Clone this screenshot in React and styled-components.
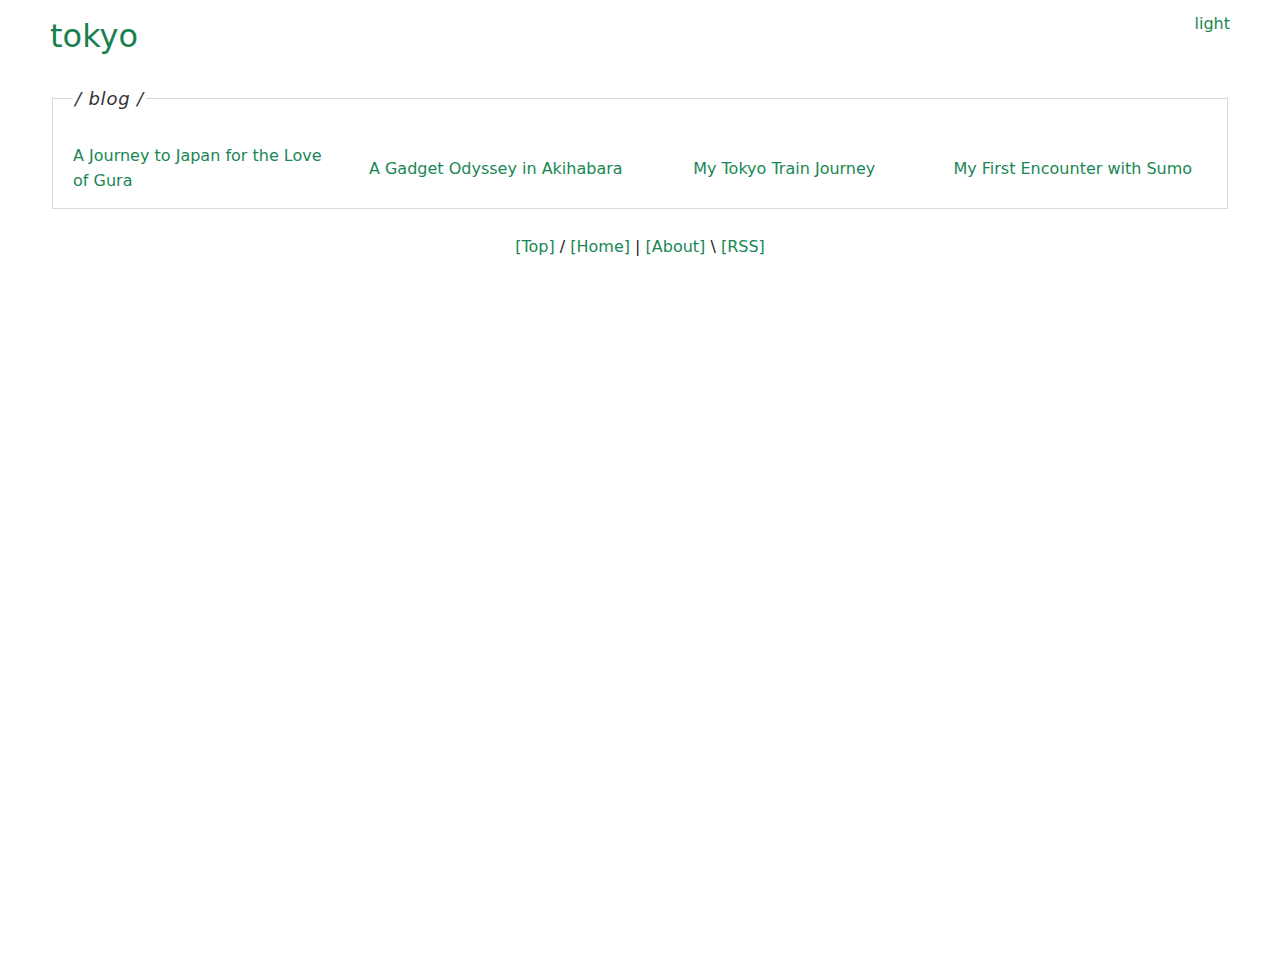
import styled, { createGlobalStyle } from 'styled-components';

const Global = createGlobalStyle`
  body {
    margin: 0;
    background: #fff;
    font-family: "DejaVu Sans", sans-serif;
    font-size: 16px;
    color: #222;
  }
  a {
    color: #198754;
    text-decoration: none;
  }
`;

const Page = styled.div`
  padding: 0 50px;
`;

const Header = styled.header`
  display: flex;
  justify-content: space-between;
  align-items: flex-start;
  padding-top: 14px;
`;

const Title = styled.a`
  font-size: 32px;
  line-height: 44px;
  color: #1a7f50;
`;

const Toggle = styled.a`
  font-size: 16px;
  line-height: 18px;
  margin-top: 1px;
`;

const Box = styled.fieldset`
  margin: 30px 2px 0;
  border: 1px solid #d5d9e0;
  padding: 34px 20px 15px;
`;

const Legend = styled.legend`
  font-style: italic;
  font-size: 18px;
  color: #333;
  padding: 0 2px;
  margin-left: 0;
  letter-spacing: 0.8px;
`;

const Posts = styled.div`
  display: grid;
  grid-template-columns: repeat(4, 1fr);
  gap: 20px;
  justify-items: center;
  align-items: center;
`;

const Post = styled.a`
  font-size: 16px;
  line-height: 25px;
`;

const Footer = styled.footer`
  text-align: center;
  margin-top: 26px;
  font-size: 16px;
  line-height: 24px;
`;

const posts = [
  'A Journey to Japan for the Love of Gura',
  'A Gadget Odyssey in Akihabara',
  'My Tokyo Train Journey',
  'My First Encounter with Sumo',
];

export default function App() {
  return (
    <Page>
      <Global />
      <Header>
        <Title href="#">tokyo</Title>
        <Toggle href="#">light</Toggle>
      </Header>
      <Box>
        <Legend>/ blog /</Legend>
        <Posts>
          {posts.map((p) => (
            <Post key={p} href="#">{p}</Post>
          ))}
        </Posts>
      </Box>
      <Footer>
        <a href="#">[Top]</a> / <a href="#">[Home]</a> | <a href="#">[About]</a> \ <a href="#">[RSS]</a>
      </Footer>
    </Page>
  );
}
